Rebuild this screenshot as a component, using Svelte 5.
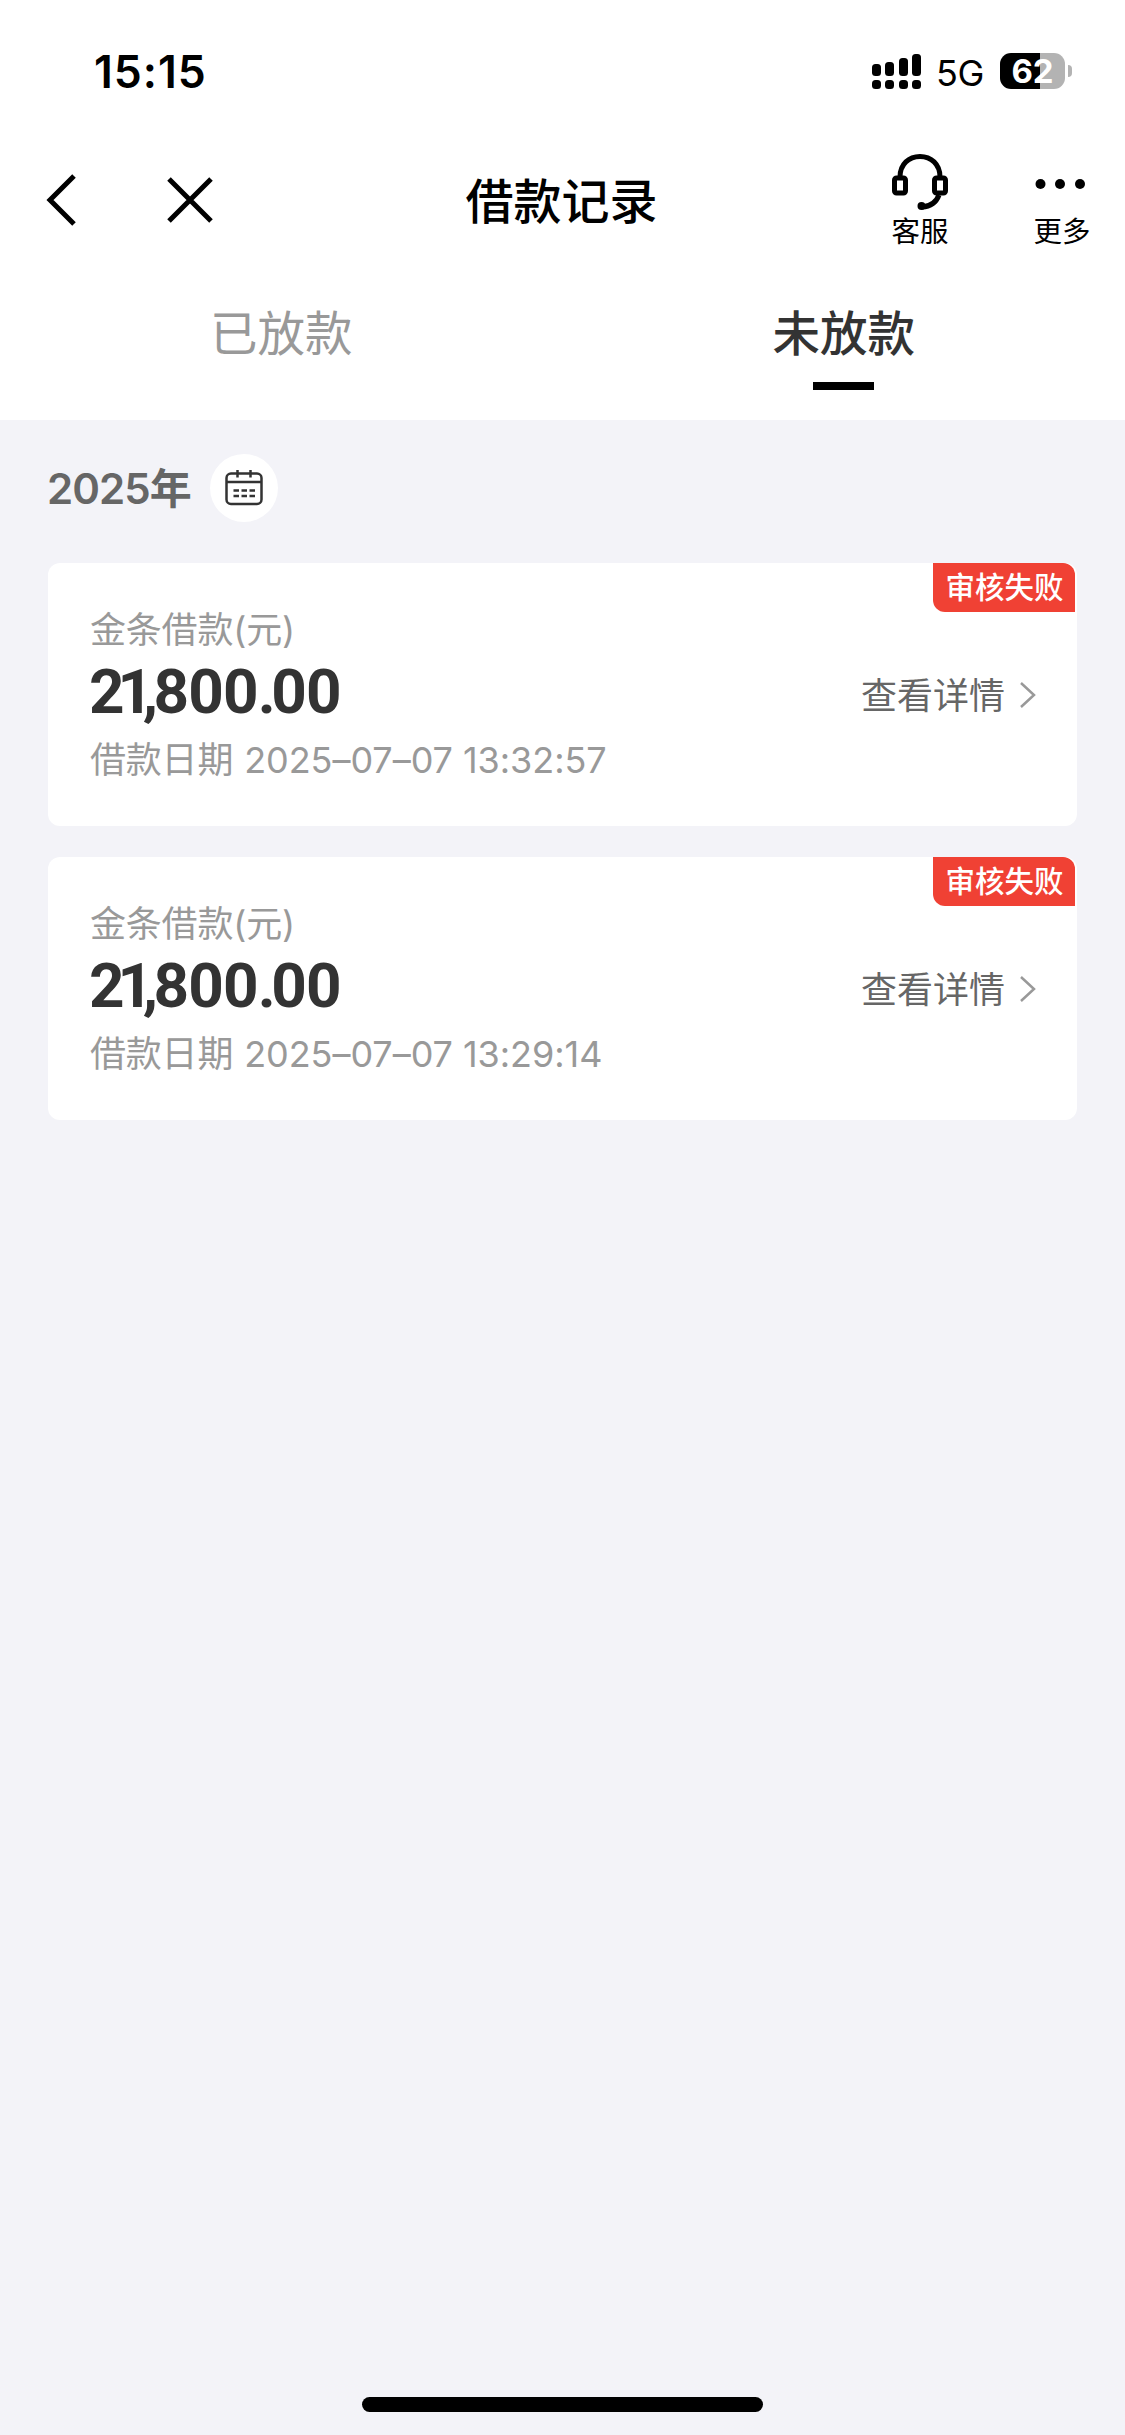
<script lang="ts">
    interface LoanRecord {
        title: string;
        amount: string;
        date: string;
        status: string;
    }

    const tabs = ["已放款", "未放款"];
    const bars = [12, 14, 18, 22];

    const records: LoanRecord[] = [
        { title: "金条借款(元)", amount: "21,800.00", date: "2025–07–07 13:32:57", status: "审核失败" },
        { title: "金条借款(元)", amount: "21,800.00", date: "2025–07–07 13:29:14", status: "审核失败" },
    ];

    let active = $state(1);

    // "1" and the separators sit tighter than the other figures
    function kern(amount: string, i: number) {
        if (amount[i] === "1") return "one";
        if (amount[i] === "," || amount[i] === ".") return "separator";
        if (amount[i + 1] === "1") return "before-one";
        return "";
    }
</script>

<div class="screen">
    <header>
        <div class="status-bar">
            <span class="time">15:15</span>
            <div class="signal">
                {#each bars as height}
                    <div class="bar">
                        <i style="height: {height}px"></i>
                        <i class="dot"></i>
                    </div>
                {/each}
            </div>
            <span class="network">5G</span>
            <div class="battery">
                <span class="level">62</span>
                <span class="nub"></span>
            </div>
        </div>

        <nav>
            <div class="nav-left">
                <button aria-label="返回">
                    <svg width="32" height="52" viewBox="0 0 32 52"><path d="M30 2 6 26l24 24" /></svg>
                </button>
                <button aria-label="关闭">
                    <svg width="46" height="46" viewBox="0 0 46 46"><path d="m2 2 42 42M44 2 2 44" /></svg>
                </button>
            </div>
            <h1>借款记录</h1>
            <div class="nav-right">
                <button class="action">
                    <svg width="58" height="58" viewBox="0 0 58 58">
                        <path d="M9 24C9 11 18 3.5 29 3.5S49 11 49 24M48 42C45 50 39 53.5 31 54" />
                        <rect x="3.5" y="25" width="11" height="15" rx="2" />
                        <rect x="43.5" y="25" width="11" height="15" rx="2" />
                        <circle cx="30.5" cy="53" r="4" class="solid" />
                    </svg>
                    <span>客服</span>
                </button>
                <button class="action">
                    <svg width="58" height="58" viewBox="0 0 58 58" class="solid">
                        <circle cx="7.5" cy="31" r="5" />
                        <circle cx="27" cy="31" r="5" />
                        <circle cx="47" cy="31" r="5" />
                    </svg>
                    <span>更多</span>
                </button>
            </div>
        </nav>

        <div class="tabs">
            {#each tabs as tab, i}
                <button class="tab" class:active={active === i} onclick={() => (active = i)}>
                    {tab}
                </button>
            {/each}
        </div>
    </header>

    <main>
        <div class="year">
            <span>2025年</span>
            <button class="calendar" aria-label="选择日期">
                <svg width="40" height="40" viewBox="0 0 40 40">
                    <rect x="2.5" y="5.5" width="35" height="30.5" rx="4.5" />
                    <path d="M2.5 14h35M13.5 2v7.5M26.5 2v7.5" />
                    <path d="M9.5 22.5H15M17.5 22.5H23M25.5 22.5H31M9.5 28H15M17.5 28H23M25.5 28H31" />
                </svg>
            </button>
        </div>

        {#each records as record}
            <article>
                <div class="info">
                    <span class="label">{record.title}</span>
                    <strong>{#each record.amount as char, i}<span class={kern(record.amount, i)}>{char}</span>{/each}</strong>
                    <span class="label">借款日期 <span class="date">{record.date}</span></span>
                </div>
                <div class="detail">
                    <span>查看详情</span>
                    <svg width="18" height="30" viewBox="0 0 18 30"><path d="m2 3 13 12L2 27" /></svg>
                </div>
                <span class="badge">{record.status}</span>
            </article>
        {/each}
    </main>

    <footer><div class="home"></div></footer>
</div>

<style>
    :global(body) {
        margin: 0;
    }

    .screen {
        display: flex;
        flex-direction: column;
        width: 1125px;
        height: 2435px;
        background: #f3f3f8;
        font-family: Inter, "Noto Sans CJK SC", sans-serif;
        color: #000;
    }

    button {
        padding: 0;
        border: 0;
        background: none;
        font: inherit;
        color: inherit;
        cursor: pointer;
    }

    svg {
        display: block;
        fill: none;
        stroke: currentColor;
    }

    .solid {
        fill: currentColor;
        stroke: none;
    }

    header {
        height: 420px;
        background: #fff;
    }

    /* Status bar */
    .status-bar {
        display: flex;
        align-items: center;
        height: 142px;
        padding: 0 53px 0 94px;
    }

    .time {
        flex: 1;
        padding-top: 2px;
        font-size: 44.5px;
        font-weight: 600;
        letter-spacing: 1px;
        line-height: 54px;
    }

    .signal {
        display: flex;
        align-items: flex-end;
        gap: 4.5px;
        height: 35px;
    }

    .bar i {
        display: block;
        width: 9px;
        border-radius: 3.5px;
        background: #000;
    }

    .bar .dot {
        height: 9px;
        margin-top: 4px;
    }

    .network {
        width: 63px;
        padding: 3px 0 0 15px;
        box-sizing: border-box;
        font-size: 36px;
        letter-spacing: -0.5px;
    }

    .battery {
        display: flex;
        align-items: center;
        gap: 3px;
        margin-left: 16px;
    }

    .level {
        width: 65px;
        height: 36px;
        border-radius: 11px;
        background: linear-gradient(90deg, #000 40px, #b3b3b3 40px);
        color: #fff;
        font-size: 33px;
        font-weight: 700;
        line-height: 37px;
        text-align: center;
    }

    .nub {
        width: 4px;
        height: 12px;
        border-radius: 0 5px 5px 0;
        background: #b3b3b3;
    }

    /* Navigation */
    nav {
        display: grid;
        grid-template-columns: 1fr auto 1fr;
        align-items: center;
        height: 116px;
    }

    .nav-left {
        display: flex;
        align-items: center;
        gap: 91px;
        padding-left: 44px;
        stroke-width: 5;
    }

    h1 {
        margin: 0;
        padding: 3px 2px 0 0;
        font-size: 48px;
        font-weight: 500;
        line-height: 60px;
    }

    .nav-right {
        display: flex;
        justify-content: flex-end;
        gap: 84px;
        padding: 5px 34px 0 0;
    }

    .action {
        display: flex;
        flex-direction: column;
        align-items: center;
        width: 58px;
        font-size: 28.5px;
        line-height: 42px;
        stroke-width: 5;
    }

    /* Tabs */
    .tabs {
        display: grid;
        grid-template-columns: 1fr 1fr;
        padding-top: 42px;
    }

    .tab {
        display: flex;
        flex-direction: column;
        align-items: center;
        height: 90px;
        color: #999;
        font-size: 47.5px;
        line-height: 68px;
    }

    .tab.active {
        color: #333;
        font-weight: 500;
    }

    .tab.active::after {
        content: "";
        width: 61px;
        height: 8px;
        margin-top: 14px;
        background: #000;
    }

    /* Records */
    main {
        flex: 1;
        padding: 33px 48px 0;
    }

    .year {
        display: flex;
        align-items: center;
        gap: 19px;
        height: 69px;
        margin-bottom: 41px;
        color: #666;
        font-size: 42px;
        font-weight: 600;
        letter-spacing: -0.9px;
    }

    .year span {
        margin-left: -1px;
        padding-bottom: 5px;
    }

    .calendar {
        display: grid;
        place-items: center;
        width: 68px;
        height: 68px;
        border-radius: 50%;
        background: #fff;
        color: #333;
        stroke-width: 2.5;
    }

    article {
        position: relative;
        display: flex;
        align-items: center;
        justify-content: space-between;
        height: 263px;
        margin-bottom: 31px;
        padding: 0 40px 0 42px;
        box-sizing: border-box;
        border-radius: 12px;
        background: #fff;
    }

    .info {
        display: flex;
        flex-direction: column;
    }

    .label {
        color: #999;
        font-size: 36px;
        letter-spacing: -0.2px;
        line-height: 54px;
        white-space: nowrap;
    }

    .date {
        margin-left: 1px;
        letter-spacing: -0.05px;
    }

    strong {
        margin-left: -1px;
        padding-bottom: 6px;
        color: #333;
        font-family: Roboto, sans-serif;
        font-size: 62px;
        font-weight: 700;
        letter-spacing: -0.8px;
        line-height: 70px;
    }

    .before-one {
        letter-spacing: -7px;
    }

    .one {
        letter-spacing: -10.5px;
    }

    .separator {
        letter-spacing: -4.5px;
    }

    .detail {
        display: flex;
        align-items: center;
        gap: 14px;
        color: #666;
        font-size: 36px;
    }

    .detail span {
        padding-bottom: 3px;
    }

    .detail svg {
        color: #999;
        stroke-width: 2.5;
    }

    .badge {
        position: absolute;
        top: 0;
        right: 2px;
        width: 142px;
        height: 49px;
        padding-left: 1px;
        box-sizing: border-box;
        border-radius: 0 12px 0 12px;
        background: #f04134;
        color: #fff;
        font-size: 29.5px;
        font-weight: 500;
        line-height: 48px;
        text-align: center;
    }

    footer {
        display: flex;
        justify-content: center;
        height: 38px;
    }

    .home {
        width: 401px;
        height: 15px;
        border-radius: 8px;
        background: #000;
    }
</style>
